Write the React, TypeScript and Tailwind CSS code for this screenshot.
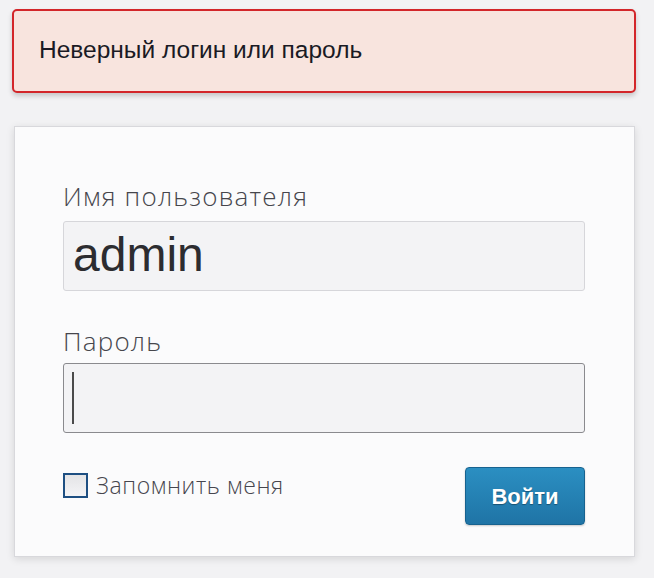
import React from 'react';

const labelFont = { fontFamily: '"Open Sans", "Noto Sans", sans-serif', fontWeight: 300 };

export default function App() {
    return (
        <div className="w-[654px] h-[578px] bg-[#f2f2f4] pt-[9px] overflow-hidden" style={{ fontFamily: '"Liberation Sans", Arial, sans-serif' }}>
            {/* error banner */}
            <div className="ml-[12px] w-[624px] h-[84px] rounded-[5px] border-2 border-[#d3262a] bg-[#f8e4de] shadow-[0_3px_5px_rgba(0,0,0,0.18)] flex items-center pl-[25px] pb-[2px]">
                <span className="text-[24.5px] text-[#1a1a24]">Неверный логин или пароль</span>
            </div>

            {/* login card */}
            <div className="mt-[33px] ml-[14px] w-[621px] h-[431px] bg-[#fbfbfc] border border-[#d8d8dc] shadow-[0_2px_8px_rgba(0,0,0,0.12)] pl-[48px] pr-[49px] pt-[54px]">
                <label className="block text-[26px] leading-[30px] text-[#46464c] tracking-[1.2px]" style={labelFont}>
                    Имя пользователя
                </label>
                <div className="mt-[10px] h-[70px] rounded-[3px] border border-[#d6d6da] bg-[#f3f3f5] flex items-center pl-[9px] pb-[2px]">
                    <span className="text-[48px] text-[#2c2c30]">admin</span>
                </div>

                <label className="block mt-[35px] text-[26px] leading-[30px] text-[#46464c] tracking-[1.2px]" style={labelFont}>
                    Пароль
                </label>
                <div className="mt-[7px] h-[70px] rounded-[3px] border border-[#8a8a8e] bg-[#f3f3f5] flex items-center pl-[8px]">
                    <div className="w-[2px] h-[52px] bg-[#4a4a4a]" />
                </div>

                <div className="mt-[34px] flex items-start justify-between">
                    <div className="flex items-center gap-[8px] mt-[5px]">
                        <div className="w-[25px] h-[25px] border-2 border-[#1e4f82] bg-gradient-to-b from-[#e4e4e6] to-[#f4f4f6]" />
                        <span className="text-[23px] leading-[26px] text-[#46464e] tracking-[0.6px]" style={labelFont}>
                            Запомнить меня
                        </span>
                    </div>
                    <button className="w-[120px] h-[58px] rounded-[4px] bg-gradient-to-b from-[#2b8fc2] to-[#1f74a6] border border-[#17628f] text-white text-[22px] font-bold shadow-[0_1px_2px_rgba(0,0,0,0.2)] [text-shadow:0_1px_1px_rgba(0,0,0,0.35)]">
                        Войти
                    </button>
                </div>
            </div>
        </div>
    );
}
